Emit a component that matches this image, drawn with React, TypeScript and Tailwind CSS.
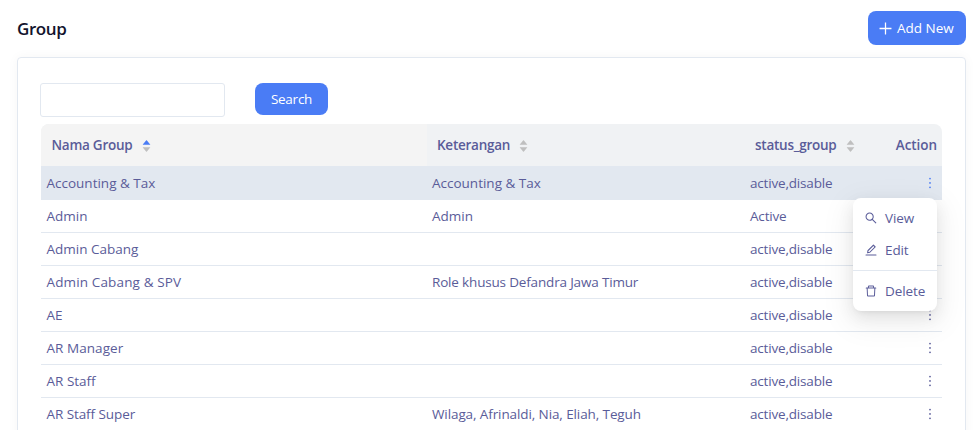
import React from "react";
import {
  AiFillCaretDown,
  AiFillCaretUp,
  AiOutlineDelete,
  AiOutlineEdit,
  AiOutlineMore,
  AiOutlinePlus,
  AiOutlineSearch,
} from "react-icons/ai";

type Group = { name: string; description: string; status: string; nameClass?: string; descriptionClass?: string };

const groups: Group[] = [
  { name: "Accounting & Tax", description: "Accounting & Tax", status: "active,disable" },
  { name: "Admin", description: "Admin", status: "Active" },
  { name: "Admin Cabang", description: "", status: "active,disable" },
  {
    name: "Admin Cabang & SPV",
    description: "Role khusus Defandra Jawa Timur",
    status: "active,disable",
    nameClass: "tracking-[0.14px]",
    descriptionClass: "tracking-[-0.17px]",
  },
  { name: "AE", description: "", status: "active,disable" },
  { name: "AR Manager", description: "", status: "active,disable", nameClass: "tracking-[0.05px]" },
  { name: "AR Staff", description: "", status: "active,disable" },
  {
    name: "AR Staff Super",
    description: "Wilaga, Afrinaldi, Nia, Eliah, Teguh",
    status: "active,disable",
    nameClass: "tracking-[-0.08px]",
    descriptionClass: "tracking-[-0.1px]",
  },
];

const columns = "grid grid-cols-[386px_318px_140px_57px]";

function Sorter({ ascending = false }: { ascending?: boolean }) {
  return (
    <span className="flex flex-col pt-px text-[11px] text-[#bfbfbf]">
      <AiFillCaretUp className={ascending ? "text-[#4a7cf5]" : ""} />
      <AiFillCaretDown className="-mt-[4px]" />
    </span>
  );
}

function ActionMenu() {
  return (
    <div className="absolute top-[31px] right-[5px] z-10 h-[113px] w-[84px] rounded-lg bg-white py-1 shadow-[0_6px_16px_0_rgba(0,0,0,0.08),0_3px_6px_-4px_rgba(0,0,0,0.12),0_9px_28px_8px_rgba(0,0,0,0.05)]">
      <div className="flex h-8 items-center gap-[7px] pl-[11px]">
        <AiOutlineSearch size={14} />
        <span className="tracking-[-0.1px]">View</span>
      </div>
      <div className="flex h-8 items-center gap-[7px] pl-[11px]">
        <AiOutlineEdit size={14} />
        <span className="tracking-[-0.1px]">Edit</span>
      </div>
      <div className="my-1 h-px bg-[#e2e8f0]" />
      <div className="flex h-8 items-center gap-[7px] pl-[11px]">
        <AiOutlineDelete size={14} />
        <span className="tracking-[-0.1px]">Delete</span>
      </div>
    </div>
  );
}

export default function App() {
  return (
    <div className="h-[430px] w-[974px] overflow-hidden bg-white pl-[17px] pr-2 pt-[11px] font-['Open_Sans','Noto_Sans',sans-serif] text-[13.5px] text-[#5a5c99]">
      <header className="flex h-[34px] items-center justify-between">
        <h1 className="pt-px text-[17px] font-semibold tracking-[-0.4px] text-[#12132d]">Group</h1>
        <button className="flex h-[34px] w-[98px] items-center gap-[3px] rounded-lg bg-[#4a7cf5] pl-[9px] text-white">
          <AiOutlinePlus size={17} />
          <span className="whitespace-nowrap">Add New</span>
        </button>
      </header>
      <main className="mt-3 h-[500px] rounded border border-[#e2e8f0] pl-[22px] pt-[25px] shadow-[0_0_12px_rgba(0,0,0,0.04)]">
        <div className="flex items-start gap-[30px]">
          <input aria-label="Search group" className="h-[34px] w-[185px] rounded-[3px] border border-[#e2e8f0] px-3 outline-none" />
          <button className="h-8 w-[73px] rounded-lg bg-[#4a7cf5] tracking-[-0.25px] text-white">Search</button>
        </div>
        <div className="ml-px mt-[7px] w-[901px]">
          <div className={`${columns} h-[43px] overflow-hidden rounded-t-lg border-b border-[#e2e8f0] bg-[#f0f2f4] font-semibold tracking-[-0.25px]`}>
            <div className="flex items-center gap-[9px] bg-[#f4f4f4] pl-[10.5px]">
              <span>Nama Group</span>
              <Sorter ascending />
            </div>
            <div className="flex items-center gap-[8px] pl-[10px]">
              <span>Keterangan</span>
              <Sorter />
            </div>
            <div className="flex items-center gap-[8px] pl-[10px]">
              <span>status_group</span>
              <Sorter />
            </div>
            <div className="flex items-center justify-end pr-[5px] tracking-[-0.05px]">Action</div>
          </div>
          {groups.map((group, index) => (
            <div
              key={group.name}
              className={`${columns} relative h-[33px] items-center border-b border-[#e2e8f0] ${index === 0 ? "bg-[#e2e8f0]" : ""}`}
            >
              <div className={`pl-[5.5px] ${group.nameClass ?? ""}`}>{group.name}</div>
              <div className={`pl-[5px] ${group.descriptionClass ?? ""}`}>{group.description}</div>
              <div className="pl-[5px] tracking-[-0.18px]">{group.status}</div>
              <div className="flex justify-end pr-[4px]">
                <AiOutlineMore size={16} className={index === 0 ? "text-[#4a7cf5]" : ""} />
              </div>
              {index === 0 && <ActionMenu />}
            </div>
          ))}
        </div>
      </main>
    </div>
  );
}
